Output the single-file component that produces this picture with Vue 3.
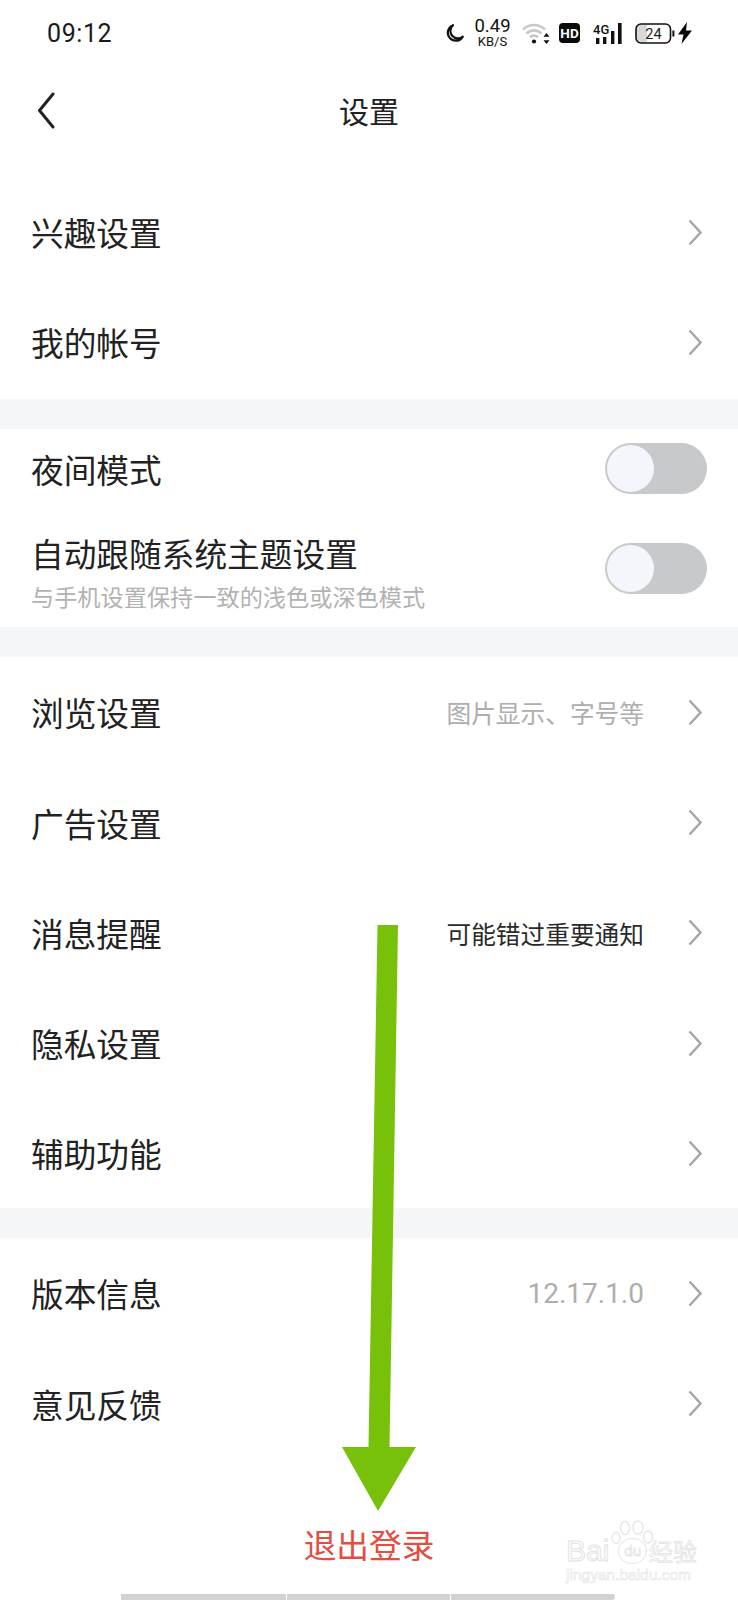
<template>
  <div class="page">
    <div class="status-bar">
      <span class="time">09:12</span>
      <div class="status-icons">
        <svg class="moon" width="18" height="18" viewBox="0 0 18 18">
          <path d="M7 1.2A8 8 0 1 0 16.8 12.6 7.4 7.4 0 0 1 7 1.2Z" fill="none" stroke="#111" stroke-width="2.2" stroke-linejoin="round" />
        </svg>
        <div class="speed">
          <span class="speed-num">0.49</span>
          <span class="speed-unit">KB/S</span>
        </div>
        <svg class="wifi" width="28" height="22" viewBox="0 0 28 22">
          <path d="M1 7.5C7 1.5 17 1.5 23 7.5M4.5 11.5C9 7.3 15 7.3 19.5 11.5M8 15.2C10.4 13.2 13.6 13.2 16 15.2" fill="none" stroke="#c9c9c9" stroke-width="2.6" />
          <circle cx="12" cy="19.5" r="2.1" fill="#111" />
          <path d="M24.5 11l3 3.8h-6zM24.5 22l3-3.8h-6z" fill="#111" />
        </svg>
        <svg class="hd" width="21" height="20" viewBox="0 0 21 20">
          <rect width="21" height="20" rx="4" fill="#0a0a0a" />
          <text x="10.5" y="15" text-anchor="middle" class="hd-text">HD</text>
        </svg>
        <svg class="signal" width="29" height="21" viewBox="0 0 29 21">
          <text x="0" y="10.5" class="net-text">4G</text>
          <rect x="3" y="15" width="3.4" height="6" fill="#111" />
          <rect x="10" y="14" width="3.4" height="7" fill="#111" />
          <rect x="18" y="8" width="3.4" height="13" fill="#111" />
          <rect x="25" y="0" width="3.6" height="21" fill="#111" />
        </svg>
        <svg class="battery" width="40" height="21" viewBox="0 0 40 21">
          <path d="M4 1.5H12V19.5H4A3 3 0 0 1 1 16.5V4.5A3 3 0 0 1 4 1.5Z" fill="#d8d8d8" />
          <rect x="1" y="1" width="34.5" height="19" rx="5" fill="none" stroke="#111" stroke-width="1.6" />
          <rect x="37.4" y="7.5" width="2" height="6" fill="#111" />
          <text x="18.5" y="16" text-anchor="middle" class="batt-text">24</text>
        </svg>
        <svg class="bolt" width="14" height="22" viewBox="0 0 14 22">
          <path d="M9 0L0 12.5H5.5L3.5 22L14 8.5H8Z" fill="#0a0a0a" />
        </svg>
      </div>
    </div>

    <div class="nav">
      <svg class="back" width="18" height="37" viewBox="0 0 18 37">
        <path d="M16 2L2.5 18.5L16 35" fill="none" stroke="#222" stroke-width="3" stroke-linecap="round" stroke-linejoin="round" />
      </svg>
      <span class="nav-title">设置</span>
    </div>

    <section v-for="(group, i) in groups" :key="i" class="group">
      <div v-for="row in group" :key="row.title" class="row" :class="[row.kind, { tall: row.sub }]">
        <div class="row-text">
          <div class="row-title">{{ row.title }}</div>
          <div v-if="row.sub" class="row-sub">{{ row.sub }}</div>
        </div>
        <div v-if="row.kind === 'toggle'" class="switch">
          <span class="knob"></span>
        </div>
        <template v-else>
          <span v-if="row.value" class="row-value" :class="{ dark: row.dark, num: row.num }">{{ row.value }}</span>
          <svg class="chevron" width="14" height="27" viewBox="0 0 14 27">
            <path d="M1.5 1.5L12.5 13.5L1.5 25.5" fill="none" stroke="#a6a6a6" stroke-width="2.4" />
          </svg>
        </template>
      </div>
    </section>

    <div class="logout">退出登录</div>

    <div class="home-bar">
      <span></span>
      <span></span>
      <span></span>
    </div>

    <svg class="arrow" width="80" height="590" viewBox="0 0 80 590">
      <path d="M36.5 0H57L48.5 522H75L37 586L1 522H27.5Z" fill="#78c10b" />
    </svg>

    <div class="watermark">
      <svg class="paw" width="42" height="30" viewBox="0 0 42 30">
        <g fill="#fff" stroke="#e6e6e6" stroke-width="1.4">
          <ellipse cx="5" cy="18" rx="4" ry="5.5" />
          <ellipse cx="14" cy="8" rx="4.5" ry="6.5" />
          <ellipse cx="27" cy="7.5" rx="5" ry="6.5" />
          <ellipse cx="37" cy="17" rx="4.5" ry="6" />
        </g>
      </svg>
      <div class="wm-line">
        <span class="wm-en">Bai</span><span class="wm-du">du</span><span class="wm-cn">经验</span>
      </div>
      <div class="wm-url">jingyan.baidu.com</div>
    </div>
  </div>
</template>

<script setup>
const groups = [
  [
    { title: '兴趣设置' },
    { title: '我的帐号' },
  ],
  [
    { title: '夜间模式', kind: 'toggle' },
    { title: '自动跟随系统主题设置', sub: '与手机设置保持一致的浅色或深色模式', kind: 'toggle' },
  ],
  [
    { title: '浏览设置', value: '图片显示、字号等' },
    { title: '广告设置' },
    { title: '消息提醒', value: '可能错过重要通知', dark: true },
    { title: '隐私设置' },
    { title: '辅助功能' },
  ],
  [
    { title: '版本信息', value: '12.17.1.0', num: true },
    { title: '意见反馈' },
  ],
];
</script>

<style>
html,
body {
  background: #fff;
}
</style>

<style scoped>
.page {
  position: relative;
  width: 738px;
  height: 1600px;
  overflow: hidden;
  background: #fff;
  color: #222;
  font-family: "Noto Sans CJK SC", "Noto Sans", sans-serif;
}

.status-bar {
  height: 66px;
  display: flex;
  align-items: center;
  justify-content: space-between;
  padding: 0 46px 0 47px;
  box-sizing: border-box;
}

.time {
  font-family: Roboto, sans-serif;
  font-size: 25px;
  color: #1a1a1a;
  letter-spacing: 0.6px;
}

.status-icons {
  display: flex;
  align-items: center;
}

.moon {
  margin-right: 10px;
}

.speed {
  display: flex;
  flex-direction: column;
  align-items: center;
  width: 37px;
  margin-right: 11px;
  font-family: Roboto, sans-serif;
  color: #111;
}

.speed-num {
  font-size: 18.5px;
  line-height: 17px;
}

.speed-unit {
  font-size: 13px;
  line-height: 13px;
}

.wifi {
  margin-right: 9px;
}

.hd {
  margin-right: 13px;
}

.hd-text {
  font-family: Roboto, sans-serif;
  font-size: 13.5px;
  font-weight: 700;
  fill: #fff;
}

.signal {
  margin-right: 13px;
}

.net-text {
  font-family: Roboto, sans-serif;
  font-size: 13px;
  font-weight: 500;
  fill: #111;
}

.battery {
  margin-right: 3px;
}

.batt-text {
  font-family: Roboto, sans-serif;
  font-size: 14.5px;
  fill: #222;
}

.nav {
  position: relative;
  height: 111px;
  padding-bottom: 22px;
  padding-left: 37px;
  box-sizing: border-box;
  display: flex;
  align-items: center;
}

.nav-title {
  position: absolute;
  left: 0;
  right: 0;
  top: 22px;
  text-align: center;
  font-size: 30px;
  line-height: 44px;
}

.group {
  border-bottom: 30px solid #f5f6f8;
}

.group:nth-of-type(1) {
  padding-bottom: 1.6px;
}

.group:nth-of-type(4) {
  border-bottom: none;
}

.row {
  height: 110.2px;
  display: flex;
  align-items: center;
  padding: 0 36px 0 31px;
  box-sizing: border-box;
}

.row.toggle {
  height: 80px;
  padding-right: 31px;
}

.row.toggle.tall {
  height: 118.4px;
}

.tall .row-text {
  margin-top: 6.5px;
}

.row-text {
  flex: 1;
  min-width: 0;
}

.row-title {
  font-size: 32.7px;
  line-height: 44px;
  white-space: nowrap;
}

.row-sub {
  margin-top: 4.5px;
  font-size: 23.2px;
  line-height: 32px;
  color: #b2b2b2;
  white-space: nowrap;
}

.row-value {
  font-size: 24.7px;
  color: #aeaeae;
  margin-right: 44px;
  white-space: nowrap;
}

.row-value.dark {
  color: #2a2a2a;
}

.row-value.num {
  font-family: Roboto, sans-serif;
  font-size: 28px;
}

.switch {
  width: 102px;
  height: 51px;
  border-radius: 26px;
  background: #c8c9cb;
  padding: 2px;
  box-sizing: border-box;
}

.knob {
  display: block;
  width: 47px;
  height: 47px;
  border-radius: 50%;
  background: #f4f6fb;
}

.logout {
  margin-top: 63px;
  text-align: center;
  font-size: 32.7px;
  line-height: 44px;
  color: #e44d40;
}

.home-bar {
  position: absolute;
  left: 121px;
  bottom: 0;
  display: flex;
  gap: 1px;
  height: 6px;
}

.home-bar span {
  background: #d2d2d2;
}

.home-bar span:nth-child(1) {
  width: 165px;
}

.home-bar span:nth-child(2) {
  width: 163px;
}

.home-bar span:nth-child(3) {
  width: 164px;
  border-radius: 0 3px 3px 0;
}

.arrow {
  position: absolute;
  left: 341px;
  top: 925px;
}

.watermark {
  position: absolute;
  left: 566px;
  top: 1520px;
  width: 134px;
  color: transparent;
}

.paw {
  position: absolute;
  left: 45px;
  top: 0;
}

.wm-line {
  position: absolute;
  left: 0;
  top: 14px;
  width: 134px;
  display: flex;
  align-items: center;
  white-space: nowrap;
}

.wm-en {
  font-family: "Liberation Sans", sans-serif;
  font-size: 30px;
  line-height: 34px;
  -webkit-text-stroke: 1px #e2e2e2;
}

.wm-du {
  font-family: "Liberation Sans", sans-serif;
  font-size: 15px;
  line-height: 24px;
  padding: 0 5px;
  margin: 0 2px 0 9px;
  border: 1.4px solid #e6e6e6;
  border-radius: 50%;
  -webkit-text-stroke: 0.7px #e2e2e2;
}

.wm-cn {
  font-size: 24px;
  line-height: 34px;
  -webkit-text-stroke: 0.8px #e2e2e2;
}

.wm-url {
  position: absolute;
  left: 0;
  top: 46px;
  font-family: "Liberation Sans", sans-serif;
  font-size: 15.5px;
  line-height: 18px;
  white-space: nowrap;
  -webkit-text-stroke: 0.6px #e4e4e4;
}
</style>
